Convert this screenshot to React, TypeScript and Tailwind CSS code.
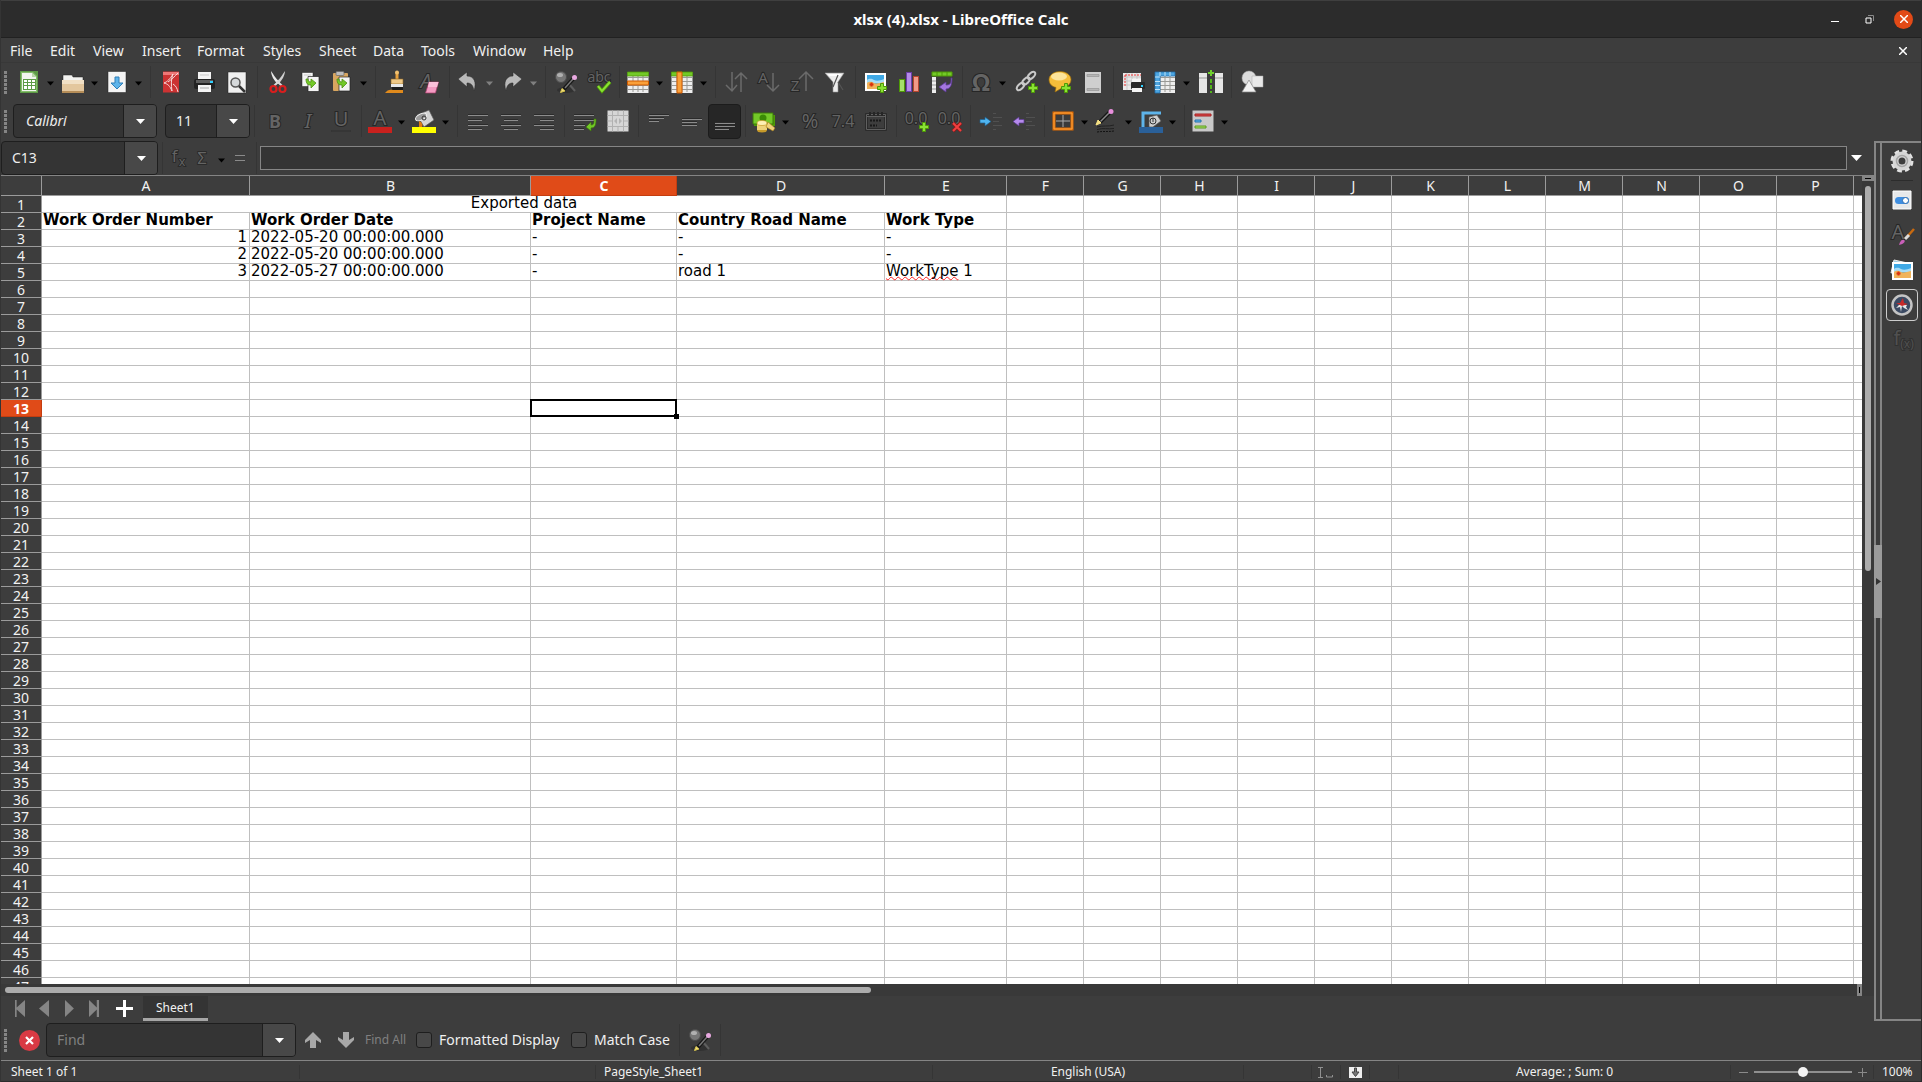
import type { ReactNode } from "react";
import clsx from "clsx";

type ToolItem = {
  label: string;
  icon: ReactNode;
  menu?: boolean;
  dimMenu?: boolean;
  pressed?: boolean;
};

const glyph = {
  fill: "#646464",
  stroke: "#262626",
  strokeWidth: 2,
  paintOrder: "stroke",
} as const;

function Icon({ children, size = 24 }: { children: ReactNode; size?: number }) {
  return (
    <svg width={size} height={size} viewBox="0 0 24 24" fill="none" className="block shrink-0 overflow-visible" aria-hidden="true">
      {children}
    </svg>
  );
}

function Glyph({ children, x = 12, y = 18, size = 18, italic, bold }: { children: string; x?: number; y?: number; size?: number; italic?: boolean; bold?: boolean }) {
  return (
    <text
      {...glyph}
      x={x}
      y={y}
      fontSize={size}
      textAnchor="middle"
      fontStyle={italic ? "italic" : "normal"}
      fontWeight={bold ? 700 : 400}
      fontFamily="Noto Sans, sans-serif"
    >
      {children}
    </text>
  );
}

function Plus({ x, y }: { x: number; y: number }) {
  return (
    <path
      transform={`translate(${x} ${y})`}
      d="M-1.5-4.5h3v3h3v3h-3v3h-3v-3h-3v-3h3z"
      fill="#8ae234"
      stroke="#4e9a06"
    />
  );
}

const lines = (rows: [number, number, number][]) =>
  rows.map(([x, y, w]) => (
    <g key={y}>
      <rect x={x} y={y - 1} width={w} height="1" fill="#2b2b2b" />
      <rect x={x} y={y} width={w} height="1" fill="#8c8c8c" />
    </g>
  ));

const findIcon = (
  <Icon>
    <ellipse cx="12" cy="20" rx="9" ry="3" fill="#2a2a2a" opacity="0.6" />
    <path d="M15 14l6 7" stroke="#5e5e5e" strokeWidth="2" />
    <circle cx="7" cy="7" r="5.5" fill="#777" stroke="#4c4c4c" />
    <ellipse cx="6" cy="5" rx="3" ry="2" fill="#b0b0b0" />
    <path d="M10 19l9-10" stroke="#161616" strokeWidth="4" />
    <path d="M11 18l8-9" stroke="#777" strokeWidth="1.5" />
    <path d="M6.500 22.500l1.500-4 3 2.500z" fill="#f5e184" stroke="#d6c34a" />
    <circle cx="20.5" cy="7.5" r="2.5" fill="#e8a8e0" />
  </Icon>
);

const pictureIcon = (
  <>
    <rect x="1" y="3" width="21" height="18" fill="#fff" />
    <rect x="3" y="5" width="17" height="14" fill="#3fa9e6" />
    <path d="M3 10c3-2 5-1 7 0s6 1 10-1v4H3z" fill="#a6dcf7" />
    <path d="M3 13c3-2 5-1 7 0s6 0 10-1v7H3z" fill="#f0b35a" />
    <path d="M7.5 12.5v4M5.5 14.5h4" stroke="#d9300e" strokeWidth="2" />
  </>
);

const gridLines = <path d="M2 7.5h20M2 11.5h20M2 15.5h20M2 19.5h20M7 2v20M12 2v20M17 2v20" stroke="#9a9a96" />;

const fileTools: ToolItem[][] = [
  [
    {
      label: "New",
      menu: true,
      icon: (
        <Icon>
          <path d="M3 1h18v22H3z" fill="#5d9b46" />
          <path d="M4 2h12l4 4v16H4z" fill="#86bd6c" />
          <path d="M5 3h10l4 4v14H5z" fill="#f1f5ee" />
          <path d="M15 3v4h4z" fill="#b8d6a8" />
          <path d="M6 9h13v11H6z" fill="#5d9b46" />
          <path d="M7 10h3v2H7zM11 10h3v2h-3zM15 10h3v2h-3zM7 13h3v2H7zM11 13h3v2h-3zM15 13h3v2h-3zM7 16h3v3H7zM11 16h3v3h-3zM15 16h3v3h-3z" fill="#fff" />
        </Icon>
      ),
    },
    {
      label: "Open",
      menu: true,
      icon: (
        <Icon>
          <path d="M2 5h9l1 2h10v4H2z" fill="#f2f2f0" stroke="#222" strokeWidth="0.5" />
          <path d="M1 10h22v12H1z" fill="#e3c79e" />
          <path d="M1 10h22v4H1z" fill="#f1e0c5" />
          <path d="M1 21h22v2H1z" fill="#b58d58" />
        </Icon>
      ),
    },
    {
      label: "Save",
      menu: true,
      icon: (
        <Icon>
          <path d="M3 1.5h18v21H3z" fill="#f4f4f4" stroke="#222" strokeWidth="0.5" />
          <path d="M10 7h4v6h4l-6 6-6-6h4z" fill="#5eb4ea" stroke="#2f7fb8" />
        </Icon>
      ),
    },
  ],
  [
    {
      label: "Export as PDF",
      icon: (
        <Icon>
          <path d="M4 1.5h16v21H4z" fill="#c33" />
          <path d="M4 2h16v3H4z" fill="#e77" />
          <path d="M14 4c-3 5-6 8-9 9 4 1 6 3 8 8-1-6-1-12 1-17z" stroke="#f6dcdc" />
          <path d="M19 3c-3 3-7 7-10 9M14 14c3 2 4 4 5 8" stroke="#f6dcdc" />
        </Icon>
      ),
    },
    {
      label: "Print",
      icon: (
        <Icon>
          <path d="M6 2h13v9H6z" fill="#f4f4f4" />
          <path d="M8 5h9" stroke="#c9c9c9" />
          <rect x="2" y="9" width="21" height="10" rx="2" fill="#222" />
          <path d="M4 10h17v3H4z" fill="#5e5e5e" />
          <path d="M6 15h13v7H6z" fill="#f4f4f4" />
          <path d="M8 18h9" stroke="#aaa" />
          <rect x="18" y="11" width="3" height="2" fill="#2fd0ff" />
        </Icon>
      ),
    },
    {
      label: "Print Preview",
      icon: (
        <Icon>
          <path d="M3 2h18v21H3z" fill="#f0f0f0" stroke="#222" strokeWidth="0.5" />
          <circle cx="10.5" cy="12.5" r="4.5" fill="#d5d8da" stroke="#555" strokeWidth="1.5" />
          <path d="M14 16l6 6" stroke="#333" strokeWidth="2.5" />
        </Icon>
      ),
    },
  ],
  [
    {
      label: "Cut",
      icon: (
        <Icon>
          <path d="M5 1c0 4 3 10 7 13l2-2C9 8 8 5 5 1z" fill="#e8e8e8" />
          <path d="M19 1c0 4-3 10-7 13l-2-2C15 8 16 5 19 1z" fill="#cfcfcf" />
          <path d="M12 12l-4 4M12 12l4 4" stroke="#d8d8d8" strokeWidth="2" />
          <circle cx="7.5" cy="19" r="3" stroke="#d81e1e" strokeWidth="2.2" />
          <circle cx="16.5" cy="19" r="3" stroke="#d81e1e" strokeWidth="2.2" />
        </Icon>
      ),
    },
    {
      label: "Copy",
      icon: (
        <Icon>
          <path d="M3 2.500h11v14H3z" fill="#f4f4f4" stroke="#222" strokeWidth="0.5" />
          <path d="M5 5h7" stroke="#ccc" />
          <path d="M9 6.500h11v15H9z" fill="#f4f4f4" stroke="#222" strokeWidth="0.7" />
          <path d="M7 9c0 5 2 6 5 6v3l5-5-5-4v3c-2 0-3-1-3-3z" fill="#73c928" stroke="#4e8f13" strokeWidth="0.8" />
        </Icon>
      ),
    },
    {
      label: "Paste",
      menu: true,
      icon: (
        <Icon>
          <rect x="3" y="3" width="15" height="18" rx="1" fill="#d8a660" />
          <rect x="6" y="1.5" width="8" height="4" rx="1" fill="#bdbdbd" stroke="#666" strokeWidth="0.7" />
          <path d="M9 7h11v14H9z" fill="#f4f4f4" stroke="#222" strokeWidth="0.7" />
          <path d="M7 9c0 5 2 6 5 6v3l5-5-5-4v3c-2 0-3-1-3-3z" fill="#73c928" stroke="#4e8f13" strokeWidth="0.8" />
        </Icon>
      ),
    },
  ],
  [
    {
      label: "Clone Formatting",
      icon: (
        <Icon>
          <path d="M11.5 2h3v8h-3z" fill="#e8a13c" />
          <circle cx="13" cy="2.5" r="2" fill="#f0c070" />
          <path d="M7 9h12v5H7z" fill="#f0c987" stroke="#8a6124" strokeWidth="0.6" />
          <path d="M7 14h12v3H7z" fill="#e9e9e9" />
          <path d="M8 17h11v3H8z" fill="#1d1d1d" />
          <path d="M1 23c2-3 5-4 8-3h10v3z" fill="#e08a1c" />
        </Icon>
      ),
    },
    {
      label: "Clear Direct Formatting",
      icon: (
        <Icon>
          <Glyph x={9} y={18} size={20} italic>A</Glyph>
          <path d="M12 12h9.5l-3 11H8.500z" fill="#f49ac2" stroke="#a93c6c" strokeWidth="0.7" />
          <path d="M12 12h9.5l-1.500 5h-9z" fill="#fbc0da" />
        </Icon>
      ),
    },
  ],
  [
    {
      label: "Undo",
      menu: true,
      dimMenu: true,
      icon: (
        <Icon>
          <path d="M2 9l9-7v4c7 0 10 6 7 15-1-6-3-8-7-8v4z" fill="#b9b9b9" stroke="#2c2c2c" strokeWidth="0.6" />
        </Icon>
      ),
    },
    {
      label: "Redo",
      menu: true,
      dimMenu: true,
      icon: (
        <Icon>
          <path d="M22 9l-9-7v4C6 6 3 12 6 21c1-6 3-8 7-8v4z" fill="#b9b9b9" stroke="#2c2c2c" strokeWidth="0.6" />
        </Icon>
      ),
    },
  ],
  [
    { label: "Find & Replace", icon: findIcon },
    {
      label: "Spelling",
      icon: (
        <Icon>
          <Glyph size={14} y={12}>abc</Glyph>
          <path d="M11 16l4 5 8-9" stroke="#4e9a06" strokeWidth="3.5" />
          <path d="M11 16l4 5 8-9" stroke="#8ae234" strokeWidth="2" />
        </Icon>
      ),
    },
  ],
  [
    {
      label: "Row",
      menu: true,
      icon: (
        <Icon>
          <path d="M1.5 2h21v21h-21z" fill="#eee" />
          {gridLines}
          <path d="M1.5 2h21v4h-21z" fill="#73c928" stroke="#4e9a06" strokeWidth="0.8" />
          <path d="M1.5 11h21v4h-21z" fill="#f9a03a" stroke="#d05a00" />
        </Icon>
      ),
    },
    {
      label: "Column",
      menu: true,
      icon: (
        <Icon>
          <path d="M1.5 2h21v21h-21z" fill="#eee" />
          {gridLines}
          <path d="M1.5 2h21v4h-21z" fill="#73c928" stroke="#4e9a06" strokeWidth="0.8" />
          <path d="M7 2h5v21H7z" fill="#f9a03a" stroke="#d05a00" />
        </Icon>
      ),
    },
  ],
  [
    {
      label: "Sort",
      icon: (
        <Icon>
          <path d="M8 2v19M2 15l6 6 5-6M17 22V3M11 9l6-6 6 6" stroke="#6b6b6b" strokeWidth="1.5" />
        </Icon>
      ),
    },
    {
      label: "Sort Ascending",
      icon: (
        <Icon>
          <Glyph x={6} y={13} size={15}>A</Glyph>
          <path d="M16 3v18M10 15l6 6 6-6" stroke="#6b6b6b" strokeWidth="1.5" />
        </Icon>
      ),
    },
    {
      label: "Sort Descending",
      icon: (
        <Icon>
          <Glyph x={5} y={21} size={15}>Z</Glyph>
          <path d="M16 21V2M9 9l7-7 7 7" stroke="#6b6b6b" strokeWidth="1.5" />
        </Icon>
      ),
    },
    {
      label: "AutoFilter",
      icon: (
        <Icon>
          <path d="M2 3h19l-6 9v10h-5V12z" fill="#ededed" stroke="#999" strokeWidth="0.6" />
          <path d="M5 4h13l-1 2H6z" fill="#fff" />
          <path d="M15 5l-5 12M15 12l5 8" stroke="#555" strokeWidth="1.2" />
        </Icon>
      ),
    },
  ],
  [
    {
      label: "Image",
      icon: (
        <Icon>
          {pictureIcon}
          <Plus x={18} y={18} />
        </Icon>
      ),
    },
    {
      label: "Chart",
      icon: (
        <Icon>
          <rect x="2.5" y="9.5" width="5" height="12" fill="#a6e06a" stroke="#4e9a06" />
          <rect x="9.5" y="2.5" width="5" height="19" fill="#b48ae8" stroke="#6b3fa8" />
          <rect x="16.5" y="6.500" width="5" height="15" fill="#f09a88" stroke="#b5452f" />
        </Icon>
      ),
    },
    {
      label: "Pivot Table",
      icon: (
        <Icon>
          <path d="M2 2h20v4H2z" fill="#73c928" stroke="#4e9a06" />
          <path d="M7 2v4M12 2v4M17 2v4" stroke="#4e9a06" />
          <path d="M2 7h4v16H2z" fill="#eee" />
          <path d="M2 11h4M2 15h4M2 19h4" stroke="#999" />
          <path d="M21 8v3c0 3-2 4-5 4v-3l-7 5 7 5v-3c5 0 6-5 6-11z" fill="#a376dd" stroke="#5c3a94" strokeWidth="0.8" />
        </Icon>
      ),
    },
  ],
  [
    { label: "Special Character", menu: true, icon: <Icon><Glyph size={24} y={21} bold>Ω</Glyph></Icon> },
    {
      label: "Hyperlink",
      icon: (
        <Icon>
          <g stroke="#c9c9c9" strokeWidth="2">
            <ellipse cx="16.5" cy="5.5" rx="2.5" ry="4.5" transform="rotate(45 16.5 5.5)" />
            <ellipse cx="11" cy="11" rx="2.5" ry="4.5" transform="rotate(45 11 11)" />
            <ellipse cx="5.500" cy="16.5" rx="2.5" ry="4.5" transform="rotate(45 5.5 16.5)" />
          </g>
          <Plus x={18} y={18} />
        </Icon>
      ),
    },
    {
      label: "Comment",
      icon: (
        <Icon>
          <path d="M12 1.5c6 0 11 3.500 11 8s-4 8-9 8.500L7 22l1-4.500C4 16.500 1 14 1 9.500s5-8 11-8z" fill="#f5bd3a" stroke="#9a6a0a" strokeWidth="0.7" />
          <ellipse cx="11" cy="6.5" rx="8" ry="4" fill="#fde49a" />
          <Plus x={18} y={18} />
        </Icon>
      ),
    },
    {
      label: "Headers and Footers",
      icon: (
        <Icon>
          <path d="M4 2h16v21H4z" fill="#cfcfcf" />
          <path d="M6 4.5h12v2H6zM6 18.5h12v2H6z" fill="#b5b5b5" stroke="#9a9a9a" strokeWidth="0.8" />
        </Icon>
      ),
    },
  ],
  [
    {
      label: "Define Print Area",
      icon: (
        <Icon>
          <path d="M1 3h18v17H1z" fill="#e9e9e9" />
          <path d="M1 7h18M1 11h18M1 15h18M5 3v17M10 3v17M15 3v17" stroke="#bbb" strokeWidth="0.7" />
          <path d="M3 5h16M3 5v11" stroke="#e33" strokeDasharray="2 1" />
          <path d="M10 9h9v3h-9z" fill="#f5f5f5" />
          <rect x="9" y="12" width="14" height="7" rx="1" fill="#2a2a2a" />
          <path d="M10 18h10v4H10z" fill="#f5f5f5" />
          <rect x="19" y="15" width="2" height="2" fill="#2fd0ff" />
        </Icon>
      ),
    },
    {
      label: "Freeze Rows and Columns",
      menu: true,
      icon: (
        <Icon>
          <path d="M2 2h20v21H2z" fill="#eee" />
          {gridLines}
          <path d="M2 2h20v4H7v17H2z" fill="#4da5e0" stroke="#2270ad" strokeWidth="0.8" />
          <path d="M2 7h5M2 11.5h5M2 15.5h5M2 19.5h5M7 2v4M12 2v4M17 2v4" stroke="#bfe2f8" />
        </Icon>
      ),
    },
    {
      label: "Split Window",
      icon: (
        <Icon>
          <path d="M0 3h8v20H0zM16 3h8v20h-8z" fill="#e6e6e6" />
          <path d="M0 8h8M16 8h8" stroke="#999" />
          <path d="M12 9v14" stroke="#52b51a" strokeWidth="2" strokeDasharray="4 2" />
          <path d="M12 0v6M9 3h6" stroke="#6fce2d" strokeWidth="2" />
        </Icon>
      ),
    },
  ],
  [
    {
      label: "Show Draw Functions",
      icon: (
        <Icon>
          <circle cx="9" cy="8" r="7" fill="#dcdcdc" stroke="#aaa" strokeWidth="0.5" />
          <path d="M12 6h11v11H12z" fill="#e9e9e9" stroke="#aaa" strokeWidth="0.5" />
          <path d="M9 10l7 12H2z" fill="#f2f2f2" stroke="#888" strokeWidth="0.7" />
        </Icon>
      ),
    },
  ],
];

const formatTools: ToolItem[][] = [
  [
    { label: "Bold", icon: <Icon><Glyph bold y={19}>B</Glyph></Icon> },
    { label: "Italic", icon: <Icon><Glyph italic y={19} size={20}>I</Glyph></Icon> },
    {
      label: "Underline",
      icon: (
        <Icon>
          <Glyph y={17} size={20}>U</Glyph>
          <path d="M2.5 21.5h19v1h-19z" fill="#777" stroke="#262626" strokeWidth="0.7" />
        </Icon>
      ),
    },
  ],
  [
    {
      label: "Font Color",
      menu: true,
      icon: (
        <Icon>
          <Glyph y={16} size={20}>A</Glyph>
          <path d="M0 18h24v6H0z" fill="#c9211e" />
        </Icon>
      ),
    },
    {
      label: "Highlighting Color",
      menu: true,
      icon: (
        <Icon>
          <path d="M5 6l12-5 5 10-10 7z" fill="#d4d4d4" stroke="#555" strokeWidth="0.7" />
          <ellipse cx="9" cy="8" rx="6" ry="3" transform="rotate(-28 9 8)" fill="#9b9b9b" stroke="#f3f3f3" />
          <circle cx="12" cy="9" r="2" stroke="#333" />
          <path d="M7 12c3 1 4 4 3 6H7z" fill="#e07a10" />
          <path d="M0 18h24v6H0z" fill="#ffff00" />
        </Icon>
      ),
    },
  ],
  [
    { label: "Align Left", icon: <Icon>{lines([[2, 6, 20], [2, 11, 14], [2, 16, 20], [2, 20, 14]])}</Icon> },
    { label: "Center Horizontally", icon: <Icon>{lines([[2, 6, 20], [5, 11, 14], [2, 16, 20], [5, 20, 14]])}</Icon> },
    { label: "Align Right", icon: <Icon>{lines([[2, 6, 20], [8, 11, 14], [2, 16, 20], [8, 20, 14]])}</Icon> },
  ],
  [
    {
      label: "Wrap Text",
      icon: (
        <Icon>
          {lines([[1, 6, 20], [1, 11, 20], [1, 16, 11], [1, 20, 10]])}
          <path d="M21 10v3c0 2-1 3-3 3v-3l-5 5 5 4v-3c4 0 5-3 5-9z" fill="#73c928" stroke="#3d7a0a" strokeWidth="0.7" />
        </Icon>
      ),
    },
    {
      label: "Merge and Center Cells",
      icon: (
        <Icon>
          <path d="M1.5 1.5h21v21h-21z" fill="#d6d6d6" />
          <path d="M1.5 6.500h21M1.5 17.5h21M6.5 1.5v21M17.5 1.5v21M12 1.5v5M12 17.5v5M1.5 12h5M17.5 12h5" stroke="#b1b1b1" />
          <path d="M11 9l-3 3 3 3zM13 9l3 3-3 3z" fill="#b3b3b3" />
        </Icon>
      ),
    },
  ],
  [
    { label: "Align Top", icon: <Icon>{lines([[2, 6, 20], [2, 9, 15], [2, 12, 10]])}</Icon> },
    { label: "Center Vertically", icon: <Icon>{lines([[2, 10, 20], [2, 13, 15], [2, 16, 15]])}</Icon> },
    { label: "Align Bottom", pressed: true, icon: <Icon>{lines([[2, 14, 20], [2, 17, 20], [2, 20, 14]])}</Icon> },
  ],
  [
    {
      label: "Format as Currency",
      menu: true,
      icon: (
        <Icon>
          <path d="M2 6h21v11H2z" fill="#4e9a06" />
          <path d="M1 4h20v11H1z" fill="#73c928" stroke="#3d7a0a" />
          <circle cx="11" cy="9" r="3.5" fill="#3a8a05" />
          <ellipse cx="10" cy="21" rx="5" ry="2.5" fill="#c79a2a" />
          <path d="M5 14h10v7H5z" fill="#eed27a" />
          <ellipse cx="10" cy="14" rx="5" ry="2.5" fill="#fdf0b5" stroke="#c79a2a" strokeWidth="0.7" />
          <path d="M16 13l7 6-2 3-7-4z" fill="#eed27a" stroke="#a87c14" strokeWidth="0.6" />
        </Icon>
      ),
    },
    { label: "Format as Percent", icon: <Icon><Glyph size={20} y={19}>%</Glyph></Icon> },
    { label: "Format as Number", icon: <Icon><Glyph size={16} y={18}>7.4</Glyph></Icon> },
    {
      label: "Format as Date",
      icon: (
        <Icon>
          <path d="M2.5 5.5h19v15h-19z" stroke="#262626" strokeWidth="2.5" />
          <path d="M2.5 5.5h19v15h-19zM2.5 7.5h19" stroke="#606060" />
          <path d="M6 3v4M10 3v4M14 3v4M18 3v4" stroke="#262626" strokeWidth="2" />
          <path d="M6 11.5h12M6 16.5h7" stroke="#191919" strokeWidth="2" strokeDasharray="2 1" />
        </Icon>
      ),
    },
  ],
  [
    {
      label: "Add Decimal Place",
      icon: (
        <Icon>
          <Glyph size={16} y={15} x={11}>0.0</Glyph>
          <Plus x={19} y={18} />
        </Icon>
      ),
    },
    {
      label: "Delete Decimal Place",
      icon: (
        <Icon>
          <Glyph size={16} y={15} x={11}>0.0</Glyph>
          <path d="M15 14l8 8M23 14l-8 8" stroke="#8f1616" strokeWidth="3.5" />
          <path d="M15 14l8 8M23 14l-8 8" stroke="#ef4040" strokeWidth="2" />
        </Icon>
      ),
    },
  ],
  [
    {
      label: "Increase Indent",
      icon: (
        <Icon>
          <path d="M14 4.5h3M14 8.500h9M14 12.5h6M14 16.500h9M14 20.5h3" stroke="#505050" />
          <path d="M1 10.5h5V8l6 4.500-6 4.500v-3H1z" fill="#4fb4f0" stroke="#1c5f8c" strokeWidth="0.7" />
        </Icon>
      ),
    },
    {
      label: "Decrease Indent",
      icon: (
        <Icon>
          <path d="M14 4.5h3M14 8.500h9M14 12.5h6M14 16.500h9M14 20.5h3" stroke="#505050" />
          <path d="M12 10.5H7V8l-6 4.500L7 17v-3h5z" fill="#b58aec" stroke="#5c3a94" strokeWidth="0.7" />
        </Icon>
      ),
    },
  ],
  [
    {
      label: "Borders",
      menu: true,
      icon: (
        <Icon>
          <path d="M3 4h18v16H3z" fill="#3a3a3a" stroke="#e06a00" strokeWidth="3" />
          <path d="M3 4h18v16H3z" stroke="#f9a545" />
          <path d="M12 6v12M5 12h14" stroke="#aaa" />
        </Icon>
      ),
    },
    {
      label: "Border Style",
      menu: true,
      icon: (
        <Icon>
          <path d="M2 18c7-2 10 0 17-2M2 20.5c7-2 10 0 17-1" stroke="#222" />
          <path d="M2 23c7-1 10 0 17-1" stroke="#111" strokeDasharray="2 1" />
          <path d="M5 13L15 3" stroke="#161616" strokeWidth="4" />
          <path d="M5.5 12.5L15 3" stroke="#8a8a8a" strokeWidth="1.5" />
          <path d="M1 16l2-5 3 3z" fill="#f5e184" stroke="#f5e184" />
          <circle cx="16" cy="2.5" r="2.5" fill="#e88fdc" />
        </Icon>
      ),
    },
    {
      label: "Border Color",
      menu: true,
      icon: (
        <Icon>
          <path d="M4 18V4h18" stroke="#5eb4ea" strokeWidth="3" />
          <path d="M10 8l8-2 4 6-8 6h-4z" fill="#cfcfcf" stroke="#555" strokeWidth="0.7" />
          <circle cx="14" cy="12" r="3" stroke="#333" />
          <path d="M14 9v4" stroke="#333" />
          <path d="M0 18h24v6H0z" fill="#2a6099" />
        </Icon>
      ),
    },
  ],
  [
    {
      label: "Conditional Formatting",
      menu: true,
      icon: (
        <Icon>
          <path d="M1.5 1.5h21v21h-21z" fill="#c9c9c9" />
          <path d="M4 5h16v2H4z" fill="#d84a4a" stroke="#a22" />
          <path d="M4 11h6v2H4z" fill="#5eb4ea" stroke="#2270ad" />
          <path d="M4 17h11v2H4z" fill="#a6e06a" stroke="#5a9a1a" />
        </Icon>
      ),
    },
  ],
];

const menus: { name: string; width: string }[] = [
  { name: "File", width: "w-[40px]" },
  { name: "Edit", width: "w-[43px]" },
  { name: "View", width: "w-[49px]" },
  { name: "Insert", width: "w-[55px]" },
  { name: "Format", width: "w-[66px]" },
  { name: "Styles", width: "w-[56px]" },
  { name: "Sheet", width: "w-[54px]" },
  { name: "Data", width: "w-[48px]" },
  { name: "Tools", width: "w-[52px]" },
  { name: "Window", width: "w-[70px]" },
  { name: "Help", width: "w-[47px]" },
];

const columns: { id: string; width: string }[] = [
  { id: "A", width: "w-[208px]" },
  { id: "B", width: "w-[281px]" },
  { id: "C", width: "w-[146px]" },
  { id: "D", width: "w-[208px]" },
  { id: "E", width: "w-[122px]" },
  ..."FGHIJKLMNOP".split("").map((id) => ({ id, width: "w-[77px]" })),
  { id: "", width: "w-auto" },
];

const sheet: Record<number, string[]> = {
  2: ["Work Order Number", "Work Order Date", "Project Name", "Country Road Name", "Work Type"],
  3: ["1", "2022-05-20 00:00:00.000", "-", "-", "-"],
  4: ["2", "2022-05-20 00:00:00.000", "-", "-", "-"],
  5: ["3", "2022-05-27 00:00:00.000", "-", "road 1", "WorkType 1"],
};

const ROWS = Array.from({ length: 47 }, (_, i) => i + 1);
const CURSOR = { row: 13, col: "C" };

function Caret({ className }: { className?: string }) {
  return (
    <svg width="9" height="5" viewBox="0 0 9 5" className={clsx("shrink-0", className)} aria-hidden="true">
      <path d="M0 0h9L4.5 5z" fill="currentColor" />
    </svg>
  );
}

function Handle() {
  return <div className="h-[23px] w-[3px] shrink-0 bg-[repeating-linear-gradient(#858585_0_3px,transparent_3px_4px)]" />;
}

function Separator() {
  return (
    <div className="flex h-8 w-2 shrink-0 justify-center">
      <div className="w-px bg-[#353535]" />
    </div>
  );
}

function Tool({ item }: { item: ToolItem }) {
  if (item.menu) {
    return (
      <div className="flex h-9 w-11 shrink-0 items-center">
        <button type="button" aria-label={item.label} className="flex h-full w-[29px] items-center justify-center">
          {item.icon}
        </button>
        <button type="button" aria-label={`${item.label} options`} className="flex h-full w-[15px] items-center justify-center pt-0.5">
          <Caret className={clsx("w-[7px]", item.dimMenu ? "text-[#808080]" : "text-black")} />
        </button>
      </div>
    );
  }
  return (
    <button
      type="button"
      aria-label={item.label}
      aria-pressed={item.pressed}
      className={clsx(
        "flex h-[35px] w-[33px] shrink-0 items-center justify-center rounded",
        item.pressed && "border border-[#1c1c1c] bg-[#262626]"
      )}
    >
      {item.icon}
    </button>
  );
}

function ToolGroups({ groups }: { groups: ToolItem[][] }) {
  return groups.map((group, i) => (
    <div key={group[0].label} className="flex items-center">
      {i > 0 && <Separator />}
      {group.map((item) => (
        <Tool key={item.label} item={item} />
      ))}
    </div>
  ));
}

type ComboProps = {
  label: string;
  value?: string;
  placeholder?: string;
  className: string;
  inputClass?: string;
};

function Combo({ label, value, placeholder, className, inputClass = "pl-3" }: ComboProps) {
  return (
    <div className={clsx("flex h-[34px] shrink-0 overflow-hidden rounded border border-[#1e1e1e] bg-[#343434]", className)}>
      <input
        type="text"
        aria-label={label}
        defaultValue={value}
        placeholder={placeholder}
        className={clsx("min-w-0 flex-1 bg-transparent text-sm text-[#eee] outline-none placeholder:text-[#808080]", inputClass)}
      />
      <button type="button" aria-label={`${label} list`} className="flex w-[33px] items-center justify-center border-l border-[#1e1e1e] bg-[#484848] text-white">
        <Caret />
      </button>
    </div>
  );
}

function TitleBar() {
  return (
    <header className="grid h-[38px] shrink-0 grid-cols-[1fr_auto_1fr] items-center border-t border-b border-t-[#3f3f3f] border-b-[#212121] bg-[#2c2c2c]">
      <span />
      <h1 className="text-[15px] font-bold text-white">xlsx (4).xlsx - LibreOffice Calc</h1>
      <div className="flex items-center justify-end gap-4 pr-2 text-white">
        <button type="button" aria-label="Minimize" className="flex size-[18px] items-center justify-center">
          <svg width="8" height="10" viewBox="0 0 8 10"><path d="M0 7h8v1H0z" fill="#fff" /></svg>
        </button>
        <button type="button" aria-label="Restore" className="flex size-[18px] items-center justify-center">
          <svg width="9" height="9" viewBox="0 0 9 9" fill="none">
            <path d="M1 3h5v5H1z" stroke="#fff" />
            <path d="M3 .5h5.5V6" stroke="#8a8a8a" />
          </svg>
        </button>
        <button type="button" aria-label="Close" className="flex size-[19px] items-center justify-center rounded-full bg-[#e24a17]">
          <svg width="8" height="8" viewBox="0 0 8 8"><path d="M0 0l8 8M8 0L0 8" stroke="#fff" strokeWidth="1.5" /></svg>
        </button>
      </div>
    </header>
  );
}

function MenuBar() {
  return (
    <nav className="flex h-[25px] shrink-0 items-center border-b border-[#383838] pt-0.5 pl-[9px] text-sm text-[#f0f0f0]">
      {menus.map((m) => (
        <button key={m.name} type="button" className={clsx("shrink-0 text-left", m.width)}>
          {m.name}
        </button>
      ))}
      <button type="button" aria-label="Close document" className="mr-3.5 ml-auto">
        <svg width="8" height="8" viewBox="0 0 8 8"><path d="M0 0l8 8M8 0L0 8" stroke="#fff" strokeWidth="1.5" /></svg>
      </button>
    </nav>
  );
}

function FormulaBar() {
  return (
    <div className="flex h-[34px] shrink-0 items-center">
      <Combo label="Name Box" value="C13" className="w-[157px]" inputClass="pl-2.5" />
      <Separator />
      <div className="flex flex-1 items-center">
        <button type="button" aria-label="Function Wizard" className="flex w-6 justify-center">
          <Icon size={20}>
            <Glyph x={8} y={17} size={20}>f</Glyph>
            <Glyph x={17} y={21} size={15}>x</Glyph>
          </Icon>
        </button>
        <button type="button" aria-label="Select Function" className="flex w-6 justify-center">
          <Icon size={20}><Glyph y={19} size={20}>Σ</Glyph></Icon>
        </button>
        <button type="button" aria-label="Function list" className="flex w-3.5 justify-center pt-1 text-black">
          <Caret className="w-[7px]" />
        </button>
        <button type="button" aria-label="Formula" className="flex w-6 justify-center">
          <svg width="10" height="10" viewBox="0 0 10 10"><path d="M0 2.5h10M0 7.5h10" stroke="#8a8a8a" /></svg>
        </button>
        <Separator />
        <input type="text" aria-label="Input line" className="h-6 min-w-0 flex-1 border border-[#858585] bg-[#343434] px-1 text-sm text-white outline-none" />
        <button type="button" aria-label="Expand Formula Bar" className="flex w-[27px] justify-center pr-2 text-white">
          <svg width="11" height="6" viewBox="0 0 11 6"><path d="M0 0h11L5.5 6z" fill="currentColor" /></svg>
        </button>
      </div>
    </div>
  );
}

function Cell({ row, col, index }: { row: number; col: string; index: number }) {
  const text = sheet[row]?.[index];
  const active = row === CURSOR.row && col === CURSOR.col;
  const numeric = index === 0 && row > 2;
  return (
    <td
      className={clsx(
        "h-[17px] border-r border-b border-[#bfbfbf] p-0 align-top text-[15px] leading-[14px] whitespace-nowrap",
        numeric ? "pr-0.5 text-right" : "pl-px text-left",
        row === 2 && "font-bold",
        active && "relative"
      )}
    >
      {text === "WorkType 1" ? (
        <>
          <span className="underline decoration-[#f22] decoration-wavy decoration-1 underline-offset-0 [text-decoration-skip-ink:none]">WorkType</span> 1
        </>
      ) : (
        text
      )}
      {active && (
        <div className="absolute -inset-px border-2 border-black">
          <div className="absolute -right-1 -bottom-1 size-[5px] bg-black" />
        </div>
      )}
    </td>
  );
}

function Grid() {
  return (
    <div className="min-h-0 flex-1 overflow-hidden bg-white">
      <table className="w-full table-fixed border-separate border-spacing-0 font-['DejaVu_Sans',sans-serif] text-black">
        <colgroup>
          <col className="w-[41px]" />
          {columns.map((c) => (
            <col key={c.id} className={c.width} />
          ))}
        </colgroup>
        <thead>
          <tr className="font-['Noto_Sans',sans-serif] text-sm leading-[19px] text-[#f2f2f2]">
            <td className="h-5 border-r border-b border-[#9b9b9b] bg-[#3d3d3d] p-0" />
            {columns.map((c) => (
              <th
                key={c.id}
                scope="col"
                className={clsx(
                  "h-5 border-b p-0 pl-px",
                  c.id === CURSOR.col ? "border-[#c43d10] bg-[#e04b18] font-bold text-white" : "border-[#9b9b9b] bg-[#3d3d3d] font-normal",
                  c.id && "border-r"
                )}
              >
                {c.id}
              </th>
            ))}
          </tr>
        </thead>
        <tbody>
          {ROWS.map((row) => (
            <tr key={row}>
              <th
                scope="row"
                className={clsx(
                  "h-[17px] border-r border-b p-0 pt-px font-['Noto_Sans',sans-serif] text-sm leading-[15px]",
                  row === CURSOR.row ? "border-[#c43d10] bg-[#e04b18] font-bold text-white" : "border-[#9b9b9b] bg-[#3d3d3d] font-normal text-[#f2f2f2]"
                )}
              >
                {row}
              </th>
              {row === 1 ? (
                <td colSpan={5} className="h-[17px] border-r border-b border-[#bfbfbf] p-0 text-center align-top text-[15px] leading-[14px]">
                  Exported data
                </td>
              ) : (
                columns.slice(0, 5).map((c, i) => <Cell key={c.id} row={row} col={c.id} index={i} />)
              )}
              {columns.slice(5).map((c) => (
                <td key={c.id} className={clsx("h-[17px] border-b border-[#bfbfbf] p-0", c.id && "border-r")} />
              ))}
            </tr>
          ))}
        </tbody>
      </table>
    </div>
  );
}

function SheetTabs() {
  const nav = [
    { label: "First sheet", d: "M0 0h1.5v8L9 0v18L1.5 10v8H0z", w: "ml-3.5 mr-3.5" },
    { label: "Previous sheet", d: "M9 0v18L0 9z", w: "mr-4" },
    { label: "Next sheet", d: "M0 0v18l8-9z", w: "mr-3.5" },
    { label: "Last sheet", d: "M0 0l7 8V0h2v18H7v-8l-7 8z", w: "mr-[17px]" },
  ];
  return (
    <div className="flex h-[25px] shrink-0 items-center">
      {nav.map((n) => (
        <button key={n.label} type="button" aria-label={n.label} className={n.w}>
          <svg width="10" height="17" viewBox="0 0 9 18" preserveAspectRatio="none"><path d={n.d} fill="#858585" /></svg>
        </button>
      ))}
      <button type="button" aria-label="Add sheet" className="mr-2.5">
        <svg width="17" height="17" viewBox="0 0 17 17"><path d="M7 0h3v7h7v3h-7v7H7v-7H0V7h7z" fill="#fff" /></svg>
      </button>
      <button type="button" className="h-full border-b-[3px] border-[#a6a6a6] bg-[#343434] px-[13px] pt-0.5 text-xs text-[#f2f2f2]">Sheet1</button>
    </div>
  );
}

function Sidebar() {
  const decks: { label: string; icon: ReactNode; active?: boolean }[] = [
    {
      label: "Properties",
      icon: (
        <Icon>
          <path d="M3 3h18v18H3z" fill="#e6e8ea" stroke="#fff" />
          <rect x="5" y="9" width="14" height="7" rx="3.5" fill="#3f8ee0" />
          <circle cx="15.5" cy="12.5" r="3" fill="#fff" stroke="#2c6cb0" />
        </Icon>
      ),
    },
    {
      label: "Styles",
      icon: (
        <Icon>
          <Glyph x={8} y={16} size={20}>A</Glyph>
          <path d="M24 6l-8 9" stroke="#c86a10" strokeWidth="2.5" />
          <path d="M19 12l-4 4" stroke="#ddd" strokeWidth="3" />
          <path d="M9 22c1-4 3-6 5-5s0 4-5 5z" fill="#c85fb8" />
        </Icon>
      ),
    },
    {
      label: "Gallery",
      icon: (
        <Icon>
          <path d="M4 2l18 4v4L1 15z" fill="#9ccbe4" stroke="#eee" />
          <g transform="translate(1 1)">{pictureIcon}</g>
        </Icon>
      ),
    },
    {
      label: "Navigator",
      active: true,
      icon: (
        <Icon>
          <circle cx="12" cy="12" r="9.5" fill="#3b4a63" stroke="#c4c4c4" strokeWidth="2.5" />
          <path d="M12 13l-1 6-1-5-4 1 3-3h8l-1 2 2 3-4-2z" fill="#e6e6e6" />
          <path d="M12 13l-6-3 4 0 3-5 1 5 4 1z" fill="#c92a2a" />
        </Icon>
      ),
    },
    {
      label: "Functions",
      icon: (
        <Icon>
          <g opacity="0.5">
            <Glyph x={7} y={17} size={20}>f</Glyph>
            <Glyph x={17} y={20} size={12}>(x)</Glyph>
          </g>
        </Icon>
      ),
    },
  ];
  return (
    <aside className="flex w-[47px] shrink-0 pt-px">
      <div className="flex w-2 shrink-0 flex-col">
        <div className="w-full flex-1 border-x-2 border-t-2 border-[#858585]" />
        <button type="button" aria-label="Hide sidebar" className="flex h-[73px] items-center justify-center bg-[#9b9b9b]">
          <svg width="5" height="7" viewBox="0 0 5 7"><path d="M0 0l5 3.5L0 7z" fill="#333" /></svg>
        </button>
        <div className="w-full flex-1 border-x-2 border-b-2 border-[#858585]" />
      </div>
      <div className="flex flex-1 flex-col items-center gap-[3px] border-y-2 border-[#858585] pt-0.5">
        <button type="button" aria-label="Sidebar Settings" className="flex size-8 items-center justify-center">
          <Icon>
            <circle cx="12" cy="12" r="9.5" stroke="#e2e2e2" strokeWidth="4" strokeDasharray="4.5 2.96" />
            <circle cx="12" cy="12" r="6.5" stroke="#d6d6d6" strokeWidth="6" />
            <circle cx="12" cy="12" r="5.5" stroke="#a6a6a6" strokeWidth="1.5" />
          </Icon>
        </button>
        <hr className="w-[22px] border-[#2c2c2c]" />
        {decks.map((d) => (
          <button
            key={d.label}
            type="button"
            aria-label={d.label}
            className={clsx("flex size-8 items-center justify-center rounded", d.active && "border border-[#ccc]")}
          >
            {d.icon}
          </button>
        ))}
      </div>
    </aside>
  );
}

function CheckOption({ label, id, className }: { label: string; id: string; className?: string }) {
  return (
    <div className={clsx("flex shrink-0 items-center gap-[7px]", className)}>
      <input id={id} type="checkbox" className="size-4 appearance-none rounded-[3px] border border-[#1e1e1e] bg-[#484848] checked:bg-[#e04b18]" />
      <label htmlFor={id} className="text-sm text-[#f0f0f0]">{label}</label>
    </div>
  );
}

function FindBar() {
  const arrow = "M8 0l8 8v3l-5-3v8H5V8l-5 3V8z";
  return (
    <div className="flex h-[39px] shrink-0 items-center pb-px pl-[3px]">
      <Handle />
      <button type="button" aria-label="Close Find Bar" className="mr-1.5 ml-3 flex size-[21px] shrink-0 items-center justify-center rounded-full bg-[#d93a44]">
        <svg width="9" height="9" viewBox="0 0 9 9"><path d="M1 1l7 7M8 1L1 8" stroke="#fff" strokeWidth="2.2" /></svg>
      </button>
      <Combo label="Find" placeholder="Find" className="w-[250px]" inputClass="pl-2.5" />
      <button type="button" aria-label="Find Previous" className="flex w-[33px] justify-center">
        <svg width="16" height="16" viewBox="0 0 16 16"><path d={arrow} fill="#a8a8a8" /></svg>
      </button>
      <button type="button" aria-label="Find Next" className="flex w-[33px] justify-center">
        <svg width="16" height="16" viewBox="0 0 16 16" className="rotate-180"><path d={arrow} fill="#a8a8a8" /></svg>
      </button>
      <button type="button" className="w-[54px] shrink-0 pl-[3px] text-left text-xs text-[#808080]">Find All</button>
      <CheckOption id="formatted-display" label="Formatted Display" className="w-[155px]" />
      <CheckOption id="match-case" label="Match Case" className="w-[104px]" />
      <Separator />
      <Tool item={{ label: "Find and Replace", icon: findIcon }} />
      <Separator />
    </div>
  );
}

function StatusBar() {
  const cell = "flex h-[14px] shrink-0 items-center border-l border-[#353535]";
  return (
    <footer className="flex h-[22px] shrink-0 items-center border-t border-b border-t-[#858585] border-b-[#2c2c2c] pt-0.5 text-xs text-[#f0f0f0]">
      <div className="w-[298px] shrink-0 pl-2.5">Sheet 1 of 1</div>
      <div className={clsx(cell, "w-[296px]")} />
      <div className={clsx(cell, "w-[337px] pl-2")}>PageStyle_Sheet1</div>
      <div className={clsx(cell, "w-[311px] justify-center")}>English (USA)</div>
      <div className={clsx(cell, "w-[68px]")} />
      <div className={clsx(cell, "w-[29px] pl-1.5")}>
        <svg width="16" height="11" viewBox="0 0 16 11" fill="none">
          <path d="M0 .5h5M2.5 0v11M0 10.5h5M8.500 8v2h6V8" stroke="#909090" />
        </svg>
      </div>
      <div className={clsx(cell, "w-[29px] pl-2")}>
        <svg width="13" height="11" viewBox="0 0 13 11" fill="none">
          <path d="M0 0h13v11H0z" fill="#eee" />
          <path d="M5.5 1h2v4h2.5L6.5 9.5 3 5h2.5z" fill="#777" stroke="#444" />
        </svg>
      </div>
      <div className={clsx(cell, "w-[29px]")} />
      <div className={clsx(cell, "flex-1 justify-center")}>Average: ; Sum: 0</div>
      <div className={clsx(cell, "w-[143px] gap-1.5 pl-2")}>
        <button type="button" aria-label="Zoom Out">
          <svg width="9" height="9" viewBox="0 0 9 9"><path d="M0 4.5h9" stroke="#8a8a8a" /></svg>
        </button>
        <input
          type="range"
          aria-label="Zoom"
          defaultValue={50}
          className="h-[2px] w-[98px] appearance-none bg-[#8f8f8f] [&::-webkit-slider-thumb]:size-[10px] [&::-webkit-slider-thumb]:appearance-none [&::-webkit-slider-thumb]:rounded-full [&::-webkit-slider-thumb]:bg-[#f2f2f2]"
        />
        <button type="button" aria-label="Zoom In">
          <svg width="9" height="9" viewBox="0 0 9 9"><path d="M0 4.5h9M4.5 0v9" stroke="#8a8a8a" /></svg>
        </button>
      </div>
      <div className={clsx(cell, "w-12 pl-2")}>100%</div>
    </footer>
  );
}

export default function App() {
  return (
    <div className="flex h-screen flex-col overflow-hidden border-x border-l-[#343434] border-r-[#2c2c2c] bg-[#3d3d3d] font-['Noto_Sans',sans-serif]">
      <TitleBar />
      <MenuBar />
      <div role="toolbar" aria-label="Standard" className="flex h-[39px] shrink-0 items-center pb-px pl-[3px]">
        <Handle />
        <div className="ml-[7px] flex">
          <ToolGroups groups={fileTools} />
        </div>
      </div>
      <div role="toolbar" aria-label="Formatting" className="flex h-[38px] shrink-0 items-center pl-[3px]">
        <Handle />
        <Combo label="Font Name" value="Calibri" className="ml-1.5 w-36" inputClass="pl-3 italic" />
        <Combo label="Font Size" value="11" className="ml-2 w-[85px]" inputClass="pl-2.5" />
        <Separator />
        <ToolGroups groups={formatTools} />
      </div>

      <div className="flex min-h-0 flex-1">
        <div className="flex min-w-0 flex-1 flex-col">
          <div className="pt-px">
            <FormulaBar />
          </div>
          <div className="flex min-h-0 flex-1 border-t border-[#858585]">
            <div className="flex min-w-0 flex-1 flex-col">
              <Grid />
              <div className="flex h-3 shrink-0 items-center bg-[#393939] pl-1">
                <div className="h-1.5 w-[866px] rounded-full bg-[#acacac]" />
                <div className="ml-auto flex h-full w-[5px] items-center justify-center bg-[#858585]">
                  <div className="h-1.5 w-px bg-black" />
                </div>
              </div>
            </div>
            <div className="flex w-3 shrink-0 flex-col items-center bg-[#393939]">
              <div className="flex h-[5px] w-full items-center justify-center bg-[#858585]">
                <div className="h-px w-1.5 bg-black" />
              </div>
              <div className="mt-[5px] h-[385px] w-1.5 rounded-full bg-[#acacac]" />
            </div>
          </div>
          <SheetTabs />
        </div>
        <Sidebar />
      </div>

      <FindBar />
      <StatusBar />
    </div>
  );
}
